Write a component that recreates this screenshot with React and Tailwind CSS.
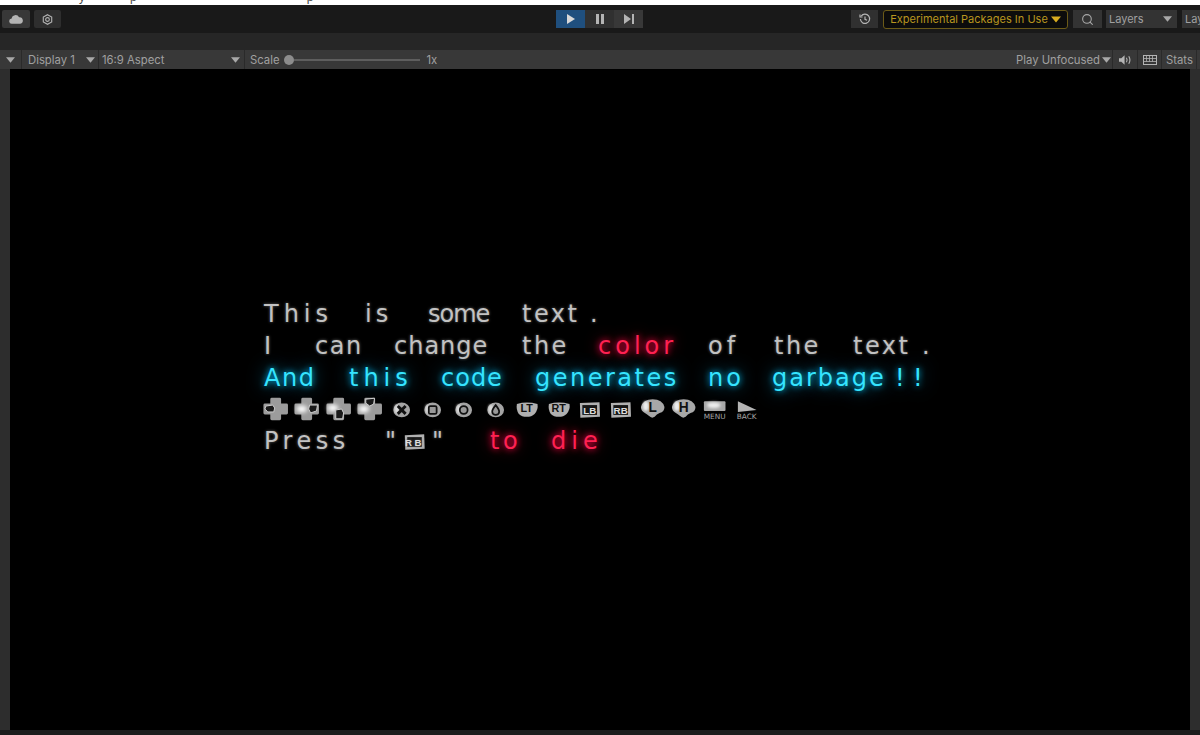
import React from 'react';
import { Search } from 'lucide-react';

const Caret = ({ className = '' }) => (
  <svg viewBox="0 0 10 6" className={`w-[9px] h-[6px] shrink-0 ${className}`}>
    <path d="M0 0h10L5 6z" fill="#a8a8a8" />
  </svg>
);

const Sep = () => <div className="w-px h-full bg-[#2a2a2a] shrink-0" />;

const Cross = ({ hole, blob }) => (
  <svg viewBox="0 0 32 28" className="w-full h-[28px]">
    <path d="M12 2.500h8a1.500 1.500 0 0 1 1.500 1.500V8.500H27a1.500 1.500 0 0 1 1.500 1.500v8a1.500 1.500 0 0 1-1.500 1.500H21.500V24a1.500 1.500 0 0 1-1.500 1.500h-8a1.500 1.500 0 0 1-1.500-1.500V19.500H5a1.500 1.500 0 0 1-1.500-1.500v-8A1.500 1.500 0 0 1 5 8.500h5.500V4A1.500 1.500 0 0 1 12 2.500z" fill="#9c9c9c" />
    {blob && <ellipse cx={blob[0]} cy={blob[1]} rx="5.500" ry="3.500" fill="#fff" className="blur-[2px]" />}
    <path d={hole} fill="#1a1a1a" stroke="#d0d0d0" strokeWidth="1" />
  </svg>
);

const Round = ({ children }) => (
  <svg viewBox="0 0 32 28" className="w-full h-[28px]">
    <ellipse cx="16" cy="15" rx="8.500" ry="7.500" fill="#a4a4a4" />
    <ellipse cx="11" cy="14" rx="2.500" ry="4.500" fill="#ddd" className="blur-[1px]" />
    {children}
  </svg>
);

const Trigger = ({ label }) => (
  <svg viewBox="0 0 32 28" className="w-full h-[28px]">
    <path d="M6 9q10-3 21 0 1 6-3 10-3 3-8 3-5 0-8-3-3-4-2-10z" fill="#b0b0b0" />
    <text x="16" y="17.500" textAnchor="middle" fontSize="11" fontWeight="700" fill="#111" fontFamily="Liberation Sans, sans-serif">{label}</text>
  </svg>
);

const Bumper = ({ label }) => (
  <svg viewBox="0 0 32 28" className="w-full h-[28px]">
    <path d="M6 8l20-1 .5 15-20 1z" fill="#b0b0b0" />
    <rect x="8.500" y="10" width="15" height="10" fill="#151515" />
    <text x="16" y="19" textAnchor="middle" fontSize="10" fontWeight="700" fill="#ddd" fontFamily="Liberation Sans, sans-serif">{label}</text>
  </svg>
);

const Stick = ({ label }) => (
  <svg viewBox="0 0 32 28" className="w-full h-[28px]">
    <path d="M4 12q2-8 12-8t12 8q0 5-5 6-3 1-5 4-3 2-6-1-2-2-4-3-4-2-4-6z" fill="#a8a8a8" />
    <ellipse cx="9" cy="11" rx="3" ry="5" fill="#eee" className="blur-[1px]" />
    <text x="16" y="17" textAnchor="middle" fontSize="14" fontWeight="700" fill="#111" fontFamily="Liberation Sans, sans-serif">{label}</text>
  </svg>
);

const Icons = () => (
  <div className="flex h-[30px] items-center tracking-normal [text-shadow:none]">
    <div className="w-[31.4px]"><Cross hole="M6 11l7-1 2 3-1 4-6 0-3-3z" /></div>
    <div className="w-[31.4px]"><Cross blob={[11, 14]} hole="M19 10l8 0-1 6-6 2-2-4z" /></div>
    <div className="w-[31.4px]"><Cross blob={[10, 13]} hole="M13 15l6-1 2 4-1 6-7 0z" /></div>
    <div className="w-[31.4px]"><Cross blob={[10, 14]} hole="M12 4l9-1-1 6-4 2-4-3z" /></div>
    <div className="w-[31.4px]">
      <Round><path d="M12 11l8 8M20 11l-8 8" stroke="#111" strokeWidth="3" /></Round>
    </div>
    <div className="w-[31.4px]">
      <Round><rect x="12" y="11" width="8" height="8" rx="1.500" fill="#999" stroke="#111" strokeWidth="1.800" /></Round>
    </div>
    <div className="w-[31.4px]">
      <Round><circle cx="16" cy="15" r="4" fill="#999" stroke="#111" strokeWidth="1.800" /></Round>
    </div>
    <div className="w-[31.4px]">
      <Round><path d="M16 10q4 5 3.500 7a3.500 3 0 0 1-7 0Q12 15 16 10z" fill="#999" stroke="#111" strokeWidth="1.800" /></Round>
    </div>
    <div className="w-[31.4px]"><Trigger label="LT" /></div>
    <div className="w-[31.4px]"><Trigger label="RT" /></div>
    <div className="w-[31.4px]"><Bumper label="LB" /></div>
    <div className="w-[31.4px]"><Bumper label="RB" /></div>
    <div className="w-[31.4px]"><Stick label="L" /></div>
    <div className="w-[31.4px]"><Stick label="H" /></div>
    <div className="w-[31.4px]">
      <svg viewBox="0 0 32 28" className="w-full h-[28px]">
        <rect x="5" y="6" width="22" height="10" rx="1" fill="#a8a8a8" />
        <ellipse cx="15" cy="10" rx="7" ry="3" fill="#eee" className="blur-[1.500px]" />
        <text x="16" y="24" textAnchor="middle" fontSize="7.500" fill="#a8a8a8" fontFamily="DejaVu Sans, sans-serif">MENU</text>
      </svg>
    </div>
    <div className="w-[31.4px]">
      <svg viewBox="0 0 32 28" className="w-full h-[28px]">
        <path d="M7 6l19 9-19 2z" fill="#b4b4b4" />
        <text x="16" y="24" textAnchor="middle" fontSize="7.500" fill="#a8a8a8" fontFamily="DejaVu Sans, sans-serif">BACK</text>
      </svg>
    </div>
  </div>
);

const white = 'text-[#c2c2c2] [text-shadow:0_0_3px_#666]';
const red = 'text-[#ff2152] [text-shadow:0_0_6px_#ff0040,0_0_14px_#b00030]';
const cyan = 'text-[#35e4ff] [text-shadow:0_0_6px_#00c8ff,0_0_18px_#0090c0]';

const Toolbar = () => (
  <div className="h-[28px] bg-[#191919] flex items-center shrink-0 pl-[2px] text-[#a0a0a0] text-[11px]">
    <button className="w-[28px] h-[18px] bg-[#383838] rounded-[2px] flex items-center justify-center">
      <svg viewBox="0 0 16 11" className="w-[14px] h-[10px]">
        <path d="M3.500 11a3 3 0 0 1-.5-6 4.500 4.500 0 0 1 8.500-1.500A3.600 3.600 0 0 1 12.500 11z" fill="#b4b4b4" />
      </svg>
    </button>
    <button className="w-[27px] h-[18px] ml-[4px] bg-[#2e2e2e] rounded-[2px] flex items-center justify-center">
      <svg viewBox="0 0 12 12" className="w-[11px] h-[11px]">
        <path d="M6 .8l4.600 2.600v5.200L6 11.200 1.400 8.600V3.400z" fill="none" stroke="#b4b4b4" strokeWidth="1.200" />
        <circle cx="6" cy="6" r="2" fill="none" stroke="#b4b4b4" strokeWidth="1.200" />
      </svg>
    </button>
    <div className="ml-[495px] flex h-[18px]">
      <button className="w-[29px] bg-[#1f4f7e] flex items-center justify-center">
        <svg viewBox="0 0 8 10" className="w-[8px] h-[10px]"><path d="M0 0l8 5-8 5z" fill="#d8d8d8" /></svg>
      </button>
      <button className="w-[29px] bg-[#303030] flex items-center justify-center">
        <svg viewBox="0 0 8 10" className="w-[8px] h-[10px]"><path d="M0 0h3v10H0zM5 0h3v10H5z" fill="#b4b4b4" /></svg>
      </button>
      <button className="w-[29px] bg-[#383838] flex items-center justify-center">
        <svg viewBox="0 0 10 10" className="w-[10px] h-[10px]"><path d="M0 0l7 5-7 5zM8 0h2v10H8z" fill="#b4b4b4" /></svg>
      </button>
    </div>
    <button className="ml-[208px] w-[27px] h-[18px] bg-[#303030] flex items-center justify-center">
      <svg viewBox="0 0 12 12" className="w-[12px] h-[12px]" fill="none" stroke="#b4b4b4" strokeWidth="1.200">
        <path d="M2.200 3.200A4.600 4.600 0 1 1 1.400 6" />
        <path d="M1 1.500v2.500h2.500M6 3.500V6.300l2 1" />
      </svg>
    </button>
    <button className="ml-[5px] w-[185px] h-[19px] bg-[#0c0c0c] border border-[#6b5a18] rounded-[3px] flex items-center justify-center gap-[3px] text-[#b8951f] whitespace-nowrap pt-px">
      Experimental Packages In Use
      <svg viewBox="0 0 10 6" className="w-[10px] h-[7px]"><path d="M0 0h10L5 6z" fill="#d9ac1f" /></svg>
    </button>
    <button className="ml-[5px] w-[29px] h-[18px] bg-[#333333] flex items-center justify-center">
      <Search className="w-[13px] h-[13px] text-[#a8a8a8]" />
    </button>
    <button className="ml-[4px] w-[71px] h-[18px] bg-[#333333] flex items-center justify-between pl-[3px] pr-[5px]">
      Layers
      <Caret />
    </button>
    <div className="ml-[5px] flex-1 h-[18px] bg-[#333333] pl-[3px] overflow-hidden leading-[18px]">Lay</div>
  </div>
);

const GameBar = () => (
  <div className="h-[19px] bg-[#383838] flex items-center shrink-0 text-[11.3px] text-[#a0a0a0]">
    <div className="w-[21px] h-full flex items-center justify-center"><Caret /></div>
    <Sep />
    <div className="w-[76px] h-full flex items-center justify-between pl-[6px] pr-[3px] pt-px">
      Display 1
      <Caret />
    </div>
    <Sep />
    <div className="w-[145px] h-full flex items-center justify-between pl-[3px] pr-[4px] pt-px">
      16:9 Aspect
      <Caret />
    </div>
    <Sep />
    <span className="ml-[5px] pt-px">Scale</span>
    <div className="ml-[5px] w-[136px] h-full flex items-center">
      <div className="w-[10px] h-[10px] rounded-full bg-[#8c8c8c] shrink-0" />
      <div className="flex-1 h-[2px] bg-[#5e5e5e]" />
    </div>
    <span className="ml-[6px] pt-px">1x</span>
    <div className="ml-auto h-full flex items-center">
      <span className="pt-px">Play Unfocused</span>
      <Caret className="ml-[2px] mr-[1px]" />
      <Sep />
      <div className="w-[24px] h-full flex items-center justify-center">
        <svg viewBox="0 0 14 10" className="w-[13px] h-[10px]">
          <path d="M0 3h2.500L6 0v10L2.500 7H0z" fill="#b4b4b4" />
          <path d="M8 2.500q1.500 2.500 0 5M10.500 1q2.500 4 0 8" fill="none" stroke="#b4b4b4" strokeWidth="1.200" />
        </svg>
      </div>
      <Sep />
      <div className="w-[23px] h-full flex items-center justify-center">
        <svg viewBox="0 0 14 10" className="w-[14px] h-[10px]" fill="none" stroke="#b4b4b4">
          <rect x=".5" y=".5" width="13" height="9" />
          <path d="M.5 3.500h13M.5 6.500h13M3.500.5v6M6.500.5v6M9.500.5v6" strokeWidth=".8" />
        </svg>
      </div>
      <Sep />
      <span className="w-[34px] pl-[4px] pt-px">Stats</span>
      <Sep />
      <div className="w-[3px]" />
    </div>
  </div>
);

const App = () => {
  return (
    <div className="w-[1200px] h-[735px] overflow-hidden flex flex-col bg-[#1c1c1c] [font-family:Inter,sans-serif]">
      {/* cropped line of the page above the screenshot */}
      <div className="h-[5px] bg-white shrink-0 overflow-hidden relative text-[12px] text-[#444] [font-family:'Liberation_Sans',sans-serif]">
        <div className="flex -mt-[10px] h-[14px] leading-[14px]">
          <span className="ml-[79px]">y</span>
          <span className="ml-[45px]">p</span>
          <span className="ml-[170px]">p</span>
        </div>
      </div>
      <Toolbar />
      <div className="h-[17px] bg-[#262626] shrink-0" />
      <GameBar />
      <div className="flex-1 flex min-h-0">
        <div className="w-[10px] bg-[#2d2d2d] shrink-0" />
        <div className="flex-1 bg-black pt-[229px] pl-[254px] text-[24px] tracking-[2.5px] [font-family:'DejaVu_Sans',sans-serif]">
          <div className={`flex h-[32px] items-center ${white}`}>
            <span className="w-[101px] tracking-[5px]">This</span>
            <span className="w-[63px] tracking-[4px]">is</span>
            <span className="w-[94px] tracking-[-1px]">some</span>
            <span className="w-[68px]">text</span>
            <span>.</span>
          </div>
          <div className={`flex h-[32px] items-center ${white}`}>
            <span className="w-[51px]">I</span>
            <span className="w-[79px] tracking-[1.5px]">can</span>
            <span className="w-[128px] tracking-[1px]">change</span>
            <span className="w-[76px]">the</span>
            <span className={`w-[110px] tracking-[4px] ${red}`}>color</span>
            <span className="w-[66px] tracking-[4px]">of</span>
            <span className="w-[79px]">the</span>
            <span className="w-[69px]">text</span>
            <span>.</span>
          </div>
          <div className={`flex h-[32px] items-center ${cyan}`}>
            <span className="w-[85px] tracking-[1.5px]">And</span>
            <span className="w-[92px] tracking-[5px]">this</span>
            <span className="w-[94px] tracking-[1px]">code</span>
            <span className="w-[173px]">generates</span>
            <span className="w-[64px] tracking-[3px]">no</span>
            <span className="w-[123px] tracking-[2px]">garbage</span>
            <span className="w-[18px]">!</span>
            <span>!</span>
          </div>
          <div className="-ml-[4px]"><Icons /></div>
          <div className={`flex h-[32px] items-center mt-[1px] ${white}`}>
            <span className="w-[121px] tracking-[4.5px]">Press</span>
            <span className="w-[15px] italic">"</span>
            <div className="w-[31px] -ml-[1px] mr-[2px]"><Bumper label="RB" /></div>
            <span className="w-[58px] italic">"</span>
            <span className={`w-[61px] tracking-[3.5px] ${red}`}>to</span>
            <span className={`tracking-[5px] ${red}`}>die</span>
          </div>
        </div>
        <div className="w-[10px] bg-[#2d2d2d] shrink-0" />
      </div>
      <div className="h-[5px] bg-[#1c1c1c] shrink-0" />
    </div>
  );
};

export default App;
